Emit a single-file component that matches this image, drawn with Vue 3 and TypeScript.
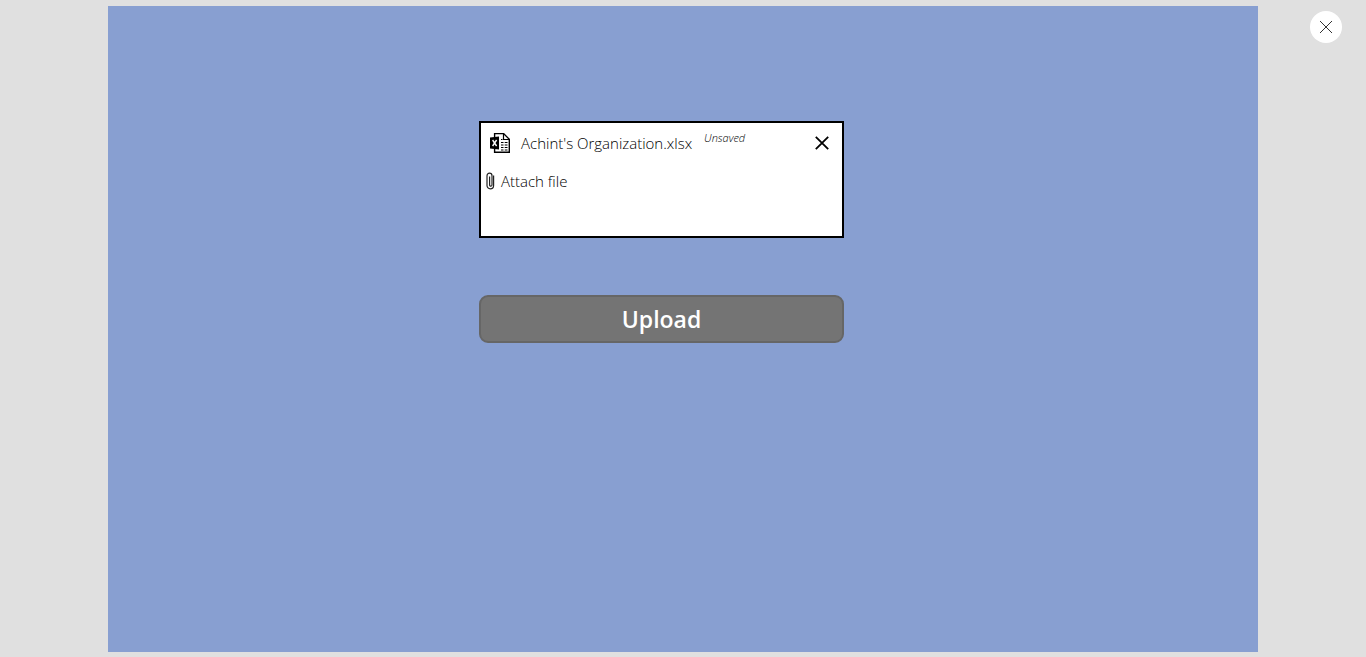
<script setup lang="ts">
import { ref } from 'vue'

interface Attachment {
  name: string
  status: string
}

const attachments = ref<Attachment[]>([
  { name: "Achint's Organization.xlsx", status: 'Unsaved' },
])

function removeAttachment(index: number): void {
  attachments.value.splice(index, 1)
}
</script>

<template>
  <div class="player">
    <main class="screen">
      <form class="form" @submit.prevent>
        <section class="attachments">
          <div v-for="(file, index) in attachments" :key="file.name" class="file">
            <svg class="file-icon" viewBox="0 0 20 20" aria-hidden="true">
              <path d="M4.600 4V.6h9l5.700 5.700v13H4.600V16" fill="none" stroke="#000" stroke-width="1.400" />
              <path d="M13.500 .6v5.900h5.800" fill="none" stroke="#000" stroke-width="1.200" />
              <path d="M0 4.500l9-1v13l-9-1z" fill="#000" />
              <path d="M2.600 7l4 6M6.600 7l-4 6" stroke="#fff" stroke-width="1.400" />
              <path d="M11 6.500h1.500M11 9.500h2.500m1.200 0h2.800M11 12h2.500m1.200 0h2.800M11 14.500h2.500m1.200 0h2.800M11 17h2.500m1.200 0h2.800" stroke="#000" stroke-width="1.100" />
            </svg>
            <span class="file-name">{{ file.name }}</span>
            <span class="status">{{ file.status }}</span>
            <button class="remove" type="button" aria-label="Remove file" @click="removeAttachment(index)">
              <svg width="14" height="14" viewBox="0 0 14 14" aria-hidden="true">
                <path d="M.8 .8l12.400 12.400M13.200 .8L.8 13.200" stroke="#000" stroke-width="1.800" />
              </svg>
            </button>
          </div>
          <button class="attach" type="button">
            <svg width="10" height="18" viewBox="0 0 10 18" aria-hidden="true">
              <path
                d="M8.600 3.500v10a3.300 3.300 0 0 1-6.600 0V3.700a2.500 2.500 0 0 1 5 0v9.300a1.200 1.200 0 0 1-2.400 0V4.500"
                fill="none"
                stroke="#222"
                stroke-width="1.200"
              />
            </svg>
            <span>Attach file</span>
          </button>
        </section>
        <button class="upload" type="submit">Upload</button>
      </form>
    </main>
    <button class="close" type="button" aria-label="Close">
      <svg width="14" height="14" viewBox="0 0 14 14" aria-hidden="true">
        <path d="M1 1l12 12M13 1L1 13" stroke="#333" stroke-width="1" />
      </svg>
    </button>
  </div>
</template>

<style>
body {
  margin: 0;
  background: #e0e0e0;
}
</style>

<style scoped>
.player {
  box-sizing: border-box;
  min-height: 100vh;
  padding: 6px 108px 5px;
  display: flex;
  background: #e0e0e0;
  font-family: "Open Sans", "Noto Sans", sans-serif;
}

button {
  padding: 0;
  border: 0;
  background: none;
  color: inherit;
  font: inherit;
  cursor: pointer;
}

svg {
  display: block;
  flex: none;
}

.screen {
  flex: 1;
  box-sizing: border-box;
  padding: 115px 43px 40px 0;
  background: #889fd1;
}

.form {
  width: 365px;
  max-width: 100%;
  margin: 0 auto;
  display: flex;
  flex-direction: column;
  gap: 57px;
}

.attachments {
  box-sizing: border-box;
  min-height: 117px;
  border: 2px solid #000;
  background: #fff;
  color: #000;
  font-size: 15px;
  font-weight: 300;
  line-height: 20px;
}

.file {
  display: flex;
  align-items: center;
  height: 40px;
  padding: 0 13px 0 9px;
}

.file-icon {
  width: 20px;
  height: 20px;
}

.file-name {
  margin-left: 11px;
}

.status {
  align-self: flex-start;
  margin: 5px 0 0 12px;
  font-size: 11px;
  font-style: italic;
}

.remove {
  margin-left: auto;
}

.attach {
  display: flex;
  align-items: center;
  gap: 6px;
  height: 36px;
  padding-left: 4px;
}

.upload {
  height: 48px;
  border: 2px solid #666;
  border-radius: 9px;
  background: #747474;
  color: #fff;
  font-size: 23px;
  font-weight: 600;
  line-height: 32px;
}

.close {
  position: absolute;
  top: 11px;
  right: 24px;
  width: 32px;
  height: 32px;
  display: flex;
  align-items: center;
  justify-content: center;
  border-radius: 50%;
  background: #fff;
}
</style>
